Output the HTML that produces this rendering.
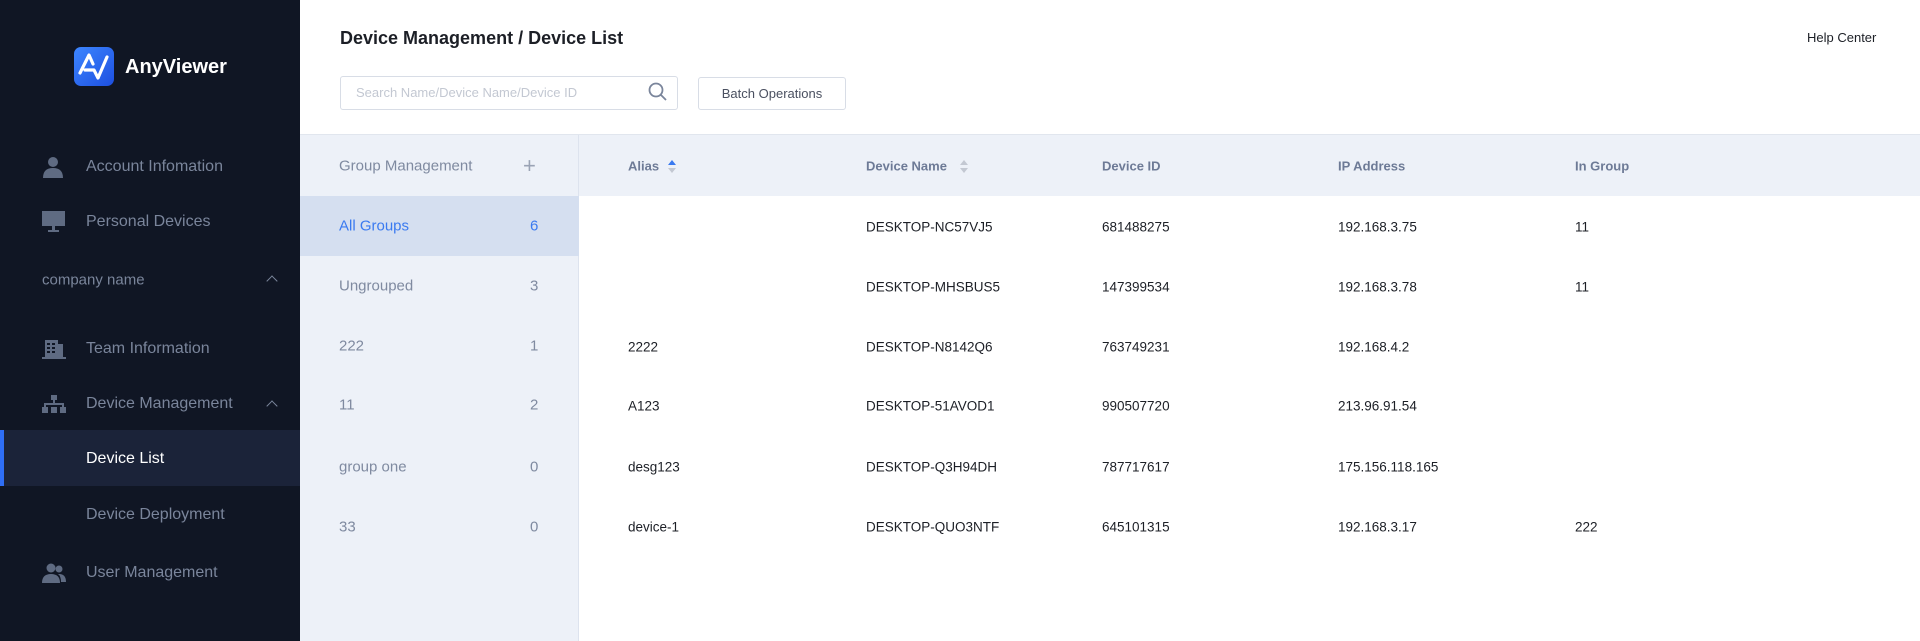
<!DOCTYPE html>
<html><head><meta charset="utf-8"><style>
*{margin:0;padding:0;box-sizing:border-box}
body{width:1920px;height:641px;overflow:hidden;font-family:"Liberation Sans",sans-serif;background:#fff;position:relative}
.sb{position:absolute;left:0;top:0;width:300px;height:641px;background:#101624}
.abs{position:absolute}
.mi{position:absolute;left:86px;font-size:16px;color:#7a859b;transform:translateY(-50%);white-space:nowrap}
.ic{position:absolute;left:42px;transform:translateY(-50%)}
.gp{position:absolute;left:300px;top:135px;width:279px;height:506px;background:#edf1f8;border-right:1px solid #dde3ee}
.gr{position:absolute;left:0;width:279px;height:60px;font-size:15px;color:#7f8aa0}
.gr span{position:absolute;top:50%;transform:translateY(-50%)}
.th{position:absolute;left:579px;top:135px;width:1341px;height:61px;background:#edf1f8;font-size:13px;font-weight:bold;color:#6d7a96}
.c{position:absolute;transform:translateY(-50%);font-size:13.5px;color:#1c1f26;white-space:nowrap}
.chev{position:absolute;left:268px;width:8px;height:8px;border-left:1.5px solid #7a859b;border-top:1.5px solid #7a859b;transform:rotate(45deg)}
</style></head><body>
<div class="sb">
  <svg class="abs" style="left:74px;top:47px" width="40" height="39" viewBox="0 0 40 39"><defs><linearGradient id="g" x1="0" y1="0" x2="1" y2="1"><stop offset="0" stop-color="#3d86ff"/><stop offset="1" stop-color="#1d4fe0"/></linearGradient></defs><rect width="40" height="39" rx="7" fill="url(#g)"/><path d="M6 26 L15 8 L19 17 M11 23 L20 23 L24 31 L33 10" stroke="#fff" stroke-width="3.2" fill="none" stroke-linejoin="round" stroke-linecap="round"/></svg>
  <div class="abs" style="left:125px;top:56px;font-size:20px;font-weight:bold;color:#fff">AnyViewer</div>

  <svg class="ic" style="top:167px" width="22" height="22" viewBox="0 0 22 22"><circle cx="11" cy="6" r="5" fill="#5f6b82"/><path d="M1 22 Q1 12 11 12 Q21 12 21 22Z" fill="#5f6b82"/></svg>
  <div class="mi" style="top:167px">Account Infomation</div>
  <svg class="ic" style="top:222px" width="23" height="22" viewBox="0 0 23 22"><rect x="0" y="0" width="23" height="15" fill="#5f6b82"/><rect x="10" y="15" width="3" height="4" fill="#5f6b82"/><rect x="6" y="19" width="11" height="2" fill="#5f6b82"/></svg>
  <div class="mi" style="top:222px">Personal Devices</div>
  <div class="mi" style="top:280px;left:42px;font-size:15px">company name</div>
  <div class="chev" style="top:277px"></div>
  <svg class="ic" style="top:349px" width="24" height="20" viewBox="0 0 24 20"><rect x="3" y="1" width="13" height="17" fill="#5f6b82"/><rect x="16" y="5" width="5" height="13" fill="#5f6b82"/><rect x="0" y="18" width="24" height="2" fill="#5f6b82"/><g fill="#101624"><rect x="5" y="4" width="3" height="2"/><rect x="10" y="4" width="3" height="2"/><rect x="5" y="8" width="3" height="2"/><rect x="10" y="8" width="3" height="2"/><rect x="5" y="12" width="3" height="2"/><rect x="10" y="12" width="3" height="2"/></g></svg>
  <div class="mi" style="top:349px">Team Information</div>
  <svg class="ic" style="top:404px" width="24" height="18" viewBox="0 0 24 18"><g fill="#5f6b82"><rect x="9" y="0" width="6" height="5"/><rect x="11" y="5" width="2" height="5"/><rect x="2" y="8" width="20" height="2"/><rect x="2" y="8" width="2" height="5"/><rect x="20" y="8" width="2" height="5"/><rect x="0" y="12" width="6" height="6"/><rect x="9" y="12" width="6" height="6"/><rect x="18" y="12" width="6" height="6"/></g></svg>
  <div class="mi" style="top:404px">Device Management</div>
  <div class="chev" style="top:402px"></div>
  <div class="abs" style="left:0;top:430px;width:300px;height:56px;background:#1b2339;border-left:4px solid #2f6ef5"></div>
  <div class="mi" style="top:459px;color:#fff">Device List</div>
  <div class="mi" style="top:515px">Device Deployment</div>
  <svg class="ic" style="top:573px" width="24" height="20" viewBox="0 0 24 20"><g fill="#5f6b82"><circle cx="9" cy="5" r="4.5"/><path d="M0 20 Q0 11 9 11 Q18 11 18 20Z"/><circle cx="17" cy="6" r="3.5"/><path d="M17 11 Q24 11 24 19 L19 19 Q19 13 16 11Z"/></g></svg>
  <div class="mi" style="top:573px">User Management</div>
</div>

<div class="abs" style="left:340px;top:28px;font-size:18px;font-weight:bold;color:#1c1f26">Device Management / Device List</div>
<div class="abs" style="left:1807px;top:30px;font-size:13px;color:#1c1f26">Help Center</div>
<div class="abs" style="left:340px;top:76px;width:338px;height:34px;border:1px solid #d8dde6;border-radius:3px"></div>
<div class="abs" style="left:356px;top:85px;font-size:13px;color:#c3c8d2">Search Name/Device Name/Device ID</div>
<svg class="abs" style="left:648px;top:82px" width="20" height="20" viewBox="0 0 20 20"><circle cx="8" cy="8" r="6.5" stroke="#7a859b" stroke-width="1.8" fill="none"/><path d="M13 13 L18 18" stroke="#7a859b" stroke-width="1.8"/></svg>
<div class="abs" style="left:698px;top:77px;width:148px;height:33px;border:1px solid #d8dde6;border-radius:3px;font-size:13px;color:#4a5060;text-align:center;line-height:31px">Batch Operations</div>
<div class="abs" style="left:300px;top:134px;width:1620px;height:1px;background:#e1e6ee"></div>

<div class="gp">
  <div class="gr" style="top:0;height:61px"><span style="left:39px">Group Management</span><span style="left:223px;font-size:22px;color:#9aa3b5">+</span></div>
  <div class="gr" style="top:61px;background:#d5dff0;color:#3a7af0"><span style="left:39px">All Groups</span><span style="left:230px">6</span></div>
  <div class="gr" style="top:121px"><span style="left:39px">Ungrouped</span><span style="left:230px">3</span></div>
  <div class="gr" style="top:181px"><span style="left:39px">222</span><span style="left:230px">1</span></div>
  <div class="gr" style="top:240px"><span style="left:39px">11</span><span style="left:230px">2</span></div>
  <div class="gr" style="top:302px"><span style="left:39px">group one</span><span style="left:230px">0</span></div>
  <div class="gr" style="top:362px"><span style="left:39px">33</span><span style="left:230px">0</span></div>
</div>

<div class="th">
  <span class="c" style="top:31px;left:49px;font-size:13px;color:#6d7a96;font-weight:bold">Alias</span>
  <svg class="abs" style="left:88px;top:24px" width="10" height="15" viewBox="0 0 10 15"><path d="M1 6 L5 1 L9 6Z" fill="#3a7af0"/><path d="M1 9 L5 14 L9 9Z" fill="#c3c8d2"/></svg>
  <span class="c" style="top:31px;left:287px;font-size:13px;color:#6d7a96;font-weight:bold">Device Name</span>
  <svg class="abs" style="left:380px;top:24px" width="10" height="15" viewBox="0 0 10 15"><path d="M1 6 L5 1 L9 6Z" fill="#c3c8d2"/><path d="M1 9 L5 14 L9 9Z" fill="#c3c8d2"/></svg>
  <span class="c" style="top:31px;left:523px;font-size:13px;color:#6d7a96;font-weight:bold">Device ID</span>
  <span class="c" style="top:31px;left:759px;font-size:13px;color:#6d7a96;font-weight:bold">IP Address</span>
  <span class="c" style="top:31px;left:996px;font-size:13px;color:#6d7a96;font-weight:bold">In Group</span>
</div>

<span class="c" style="top:227px;left:866px">DESKTOP-NC57VJ5</span><span class="c" style="top:227px;left:1102px">681488275</span><span class="c" style="top:227px;left:1338px">192.168.3.75</span><span class="c" style="top:227px;left:1575px">11</span>
<span class="c" style="top:287px;left:866px">DESKTOP-MHSBUS5</span><span class="c" style="top:287px;left:1102px">147399534</span><span class="c" style="top:287px;left:1338px">192.168.3.78</span><span class="c" style="top:287px;left:1575px">11</span>
<span class="c" style="top:347px;left:628px">2222</span><span class="c" style="top:347px;left:866px">DESKTOP-N8142Q6</span><span class="c" style="top:347px;left:1102px">763749231</span><span class="c" style="top:347px;left:1338px">192.168.4.2</span>
<span class="c" style="top:406px;left:628px">A123</span><span class="c" style="top:406px;left:866px">DESKTOP-51AVOD1</span><span class="c" style="top:406px;left:1102px">990507720</span><span class="c" style="top:406px;left:1338px">213.96.91.54</span>
<span class="c" style="top:467px;left:628px">desg123</span><span class="c" style="top:467px;left:866px">DESKTOP-Q3H94DH</span><span class="c" style="top:467px;left:1102px">787717617</span><span class="c" style="top:467px;left:1338px">175.156.118.165</span>
<span class="c" style="top:527px;left:628px">device-1</span><span class="c" style="top:527px;left:866px">DESKTOP-QUO3NTF</span><span class="c" style="top:527px;left:1102px">645101315</span><span class="c" style="top:527px;left:1338px">192.168.3.17</span><span class="c" style="top:527px;left:1575px">222</span>
</body></html>
